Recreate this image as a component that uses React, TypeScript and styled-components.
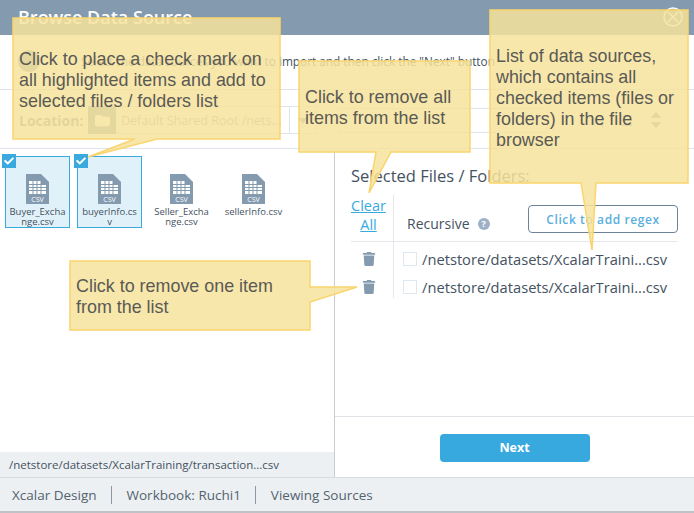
import { Fragment } from "react";
import styled, { createGlobalStyle } from "styled-components";
import { FaCheck, FaFolder, FaTrash } from "react-icons/fa";

const GlobalStyle = createGlobalStyle`
  html, body {
    margin: 0;
    padding: 0;
    background: #fff;
    font-family: "Open Sans", sans-serif;
  }
  * {
    box-sizing: border-box;
  }
`;

const Page = styled.div`
  position: relative;
  width: 694px;
  height: 513px;
  overflow: hidden;
  display: flex;
  flex-direction: column;
  color: #44525f;
`;
const Header = styled.div`
  position: relative;
  height: 35px;
  flex: none;
  background: #839aaf;
  color: #fff;
  font-size: 18px;
  font-weight: 600;
  line-height: 35px;
  padding-left: 18px;
`;
const CloseIcon = styled.svg`
  position: absolute;
  right: 11px;
  top: 7px;
`;
const Intro = styled.div`
  height: 55px;
  flex: none;
  display: flex;
  align-items: center;
  gap: 41px;
  padding: 0 0 3px 18px;
  font-size: 11.8px;
  border-bottom: 1px solid #dfe3ec;
  white-space: nowrap;
`;
const InfoDot = styled.div`
  width: 22px;
  height: 22px;
  border-radius: 50%;
  background: #839aaf;
`;
const Toolbar = styled.div`
  height: 59px;
  flex: none;
  display: flex;
  align-items: center;
  padding: 2px 0 0 19px;
  border-bottom: 1px solid #dfe3ec;
`;
const LocationLabel = styled.div`
  width: 69px;
  font-size: 14px;
  font-weight: 700;
  color: #6d8094;
`;
const FolderButton = styled.div`
  width: 28px;
  height: 28px;
  background: #839aaf;
  color: #fff;
  display: flex;
  align-items: center;
  justify-content: center;
`;
const PathInput = styled.div`
  width: 174px;
  height: 28px;
  padding-left: 5px;
  line-height: 28px;
  font-size: 12.5px;
  color: #8b9bab;
  border: 1px solid #dfe3ec;
  border-left: none;
  white-space: nowrap;
`;
const PathDropdown = styled.div`
  position: relative;
  width: 27px;
  height: 28px;
  border: 1px solid #dfe3ec;
  border-left: none;
  &::after {
    content: "";
    position: absolute;
    left: 8px;
    top: 11px;
    border: 5px solid transparent;
    border-top: 6px solid #839aaf;
  }
`;
const SearchInput = styled.div`
  width: 210px;
  height: 25px;
  margin-left: 21px;
  border: 1px solid #dfe3ec;
`;
const ToolIcons = styled.div`
  display: flex;
  align-items: center;
  gap: 14px;
  margin-left: 43px;
  font-size: 15px;
  color: #839aaf;
`;
const SortArrows = styled.svg`
  margin-left: 3px;
`;
const Body = styled.div`
  flex: 1;
  min-height: 0;
  display: flex;
`;
const LeftPanel = styled.div`
  width: 335px;
  flex: none;
  display: flex;
  flex-direction: column;
  border-right: 1px solid #c9cdd2;
`;
const FileGrid = styled.div`
  flex: 1;
  display: flex;
  align-items: flex-start;
  gap: 7px;
  padding: 7px 0 0 5px;
`;
const FileCard = styled.div<{ $selected?: boolean }>`
  position: relative;
  width: 65px;
  height: 72px;
  display: flex;
  flex-direction: column;
  align-items: center;
  padding-top: 17px;
  border: 1px solid ${(p) => (p.$selected ? "#3aa9de" : "transparent")};
  background: ${(p) => (p.$selected ? "#e0f1f9" : "transparent")};
`;
const FileName = styled.div`
  width: 58.5px;
  margin-top: 3px;
  text-align: center;
  font-size: 9.5px;
  line-height: 10px;
  word-break: break-all;
`;
const CheckMark = styled.div`
  position: absolute;
  left: -4px;
  top: -3px;
  width: 14px;
  height: 14px;
  background: #3aa9de;
  color: #fff;
  font-size: 10px;
  display: flex;
  align-items: center;
  justify-content: center;
`;
const PathBar = styled.div`
  height: 25px;
  flex: none;
  background: #edf0f3;
  padding-left: 9px;
  font-size: 11.5px;
  line-height: 25px;
`;
const RightPanel = styled.div`
  flex: 1;
  display: flex;
  flex-direction: column;
`;
const SelectedArea = styled.div`
  flex: 1;
  padding: 16px 16px 0;
`;
const SelectedTitle = styled.div`
  font-size: 16.5px;
  line-height: 22px;
  margin-bottom: 8px;
  white-space: nowrap;
`;
const SelectedTable = styled.div`
  display: grid;
  grid-template-columns: 43px 1fr;
`;
const ClearCell = styled.div`
  border-right: 1px solid #e4e8ec;
  border-bottom: 1px solid #e4e8ec;
  height: 47px;
  padding: 1px 7px 0 0;
  text-align: center;
  font-size: 14.5px;
  line-height: 19px;
  color: #3aa9de;
  text-decoration: underline;
`;
const HeaderCell = styled.div`
  height: 47px;
  display: flex;
  align-items: flex-start;
  justify-content: space-between;
  padding-left: 13px;
  border-bottom: 1px solid #e4e8ec;
`;
const RecursiveLabel = styled.div`
  display: flex;
  align-items: center;
  gap: 8px;
  margin-top: 19px;
  font-size: 14px;
  line-height: 20px;
`;
const HelpDot = styled.span`
  width: 12px;
  height: 12px;
  border-radius: 50%;
  background: #9fb1c7;
  color: #fff;
  font-size: 9px;
  font-weight: 700;
  line-height: 12px;
  text-align: center;
`;
const RegexButton = styled.div`
  width: 150px;
  height: 28px;
  margin-top: 10px;
  border: 1px solid #6e8398;
  border-radius: 4px;
  text-align: center;
  font-size: 12px;
  font-weight: 600;
  letter-spacing: 0.6px;
  line-height: 27px;
  color: #5aaee0;
`;
const TrashCell = styled.div`
  height: 28px;
  display: flex;
  align-items: center;
  justify-content: center;
  padding: 6px 7px 0 0;
  border-right: 1px solid #e4e8ec;
  color: #839aaf;
  font-size: 14px;
`;
const SourceRow = styled.div`
  height: 28px;
  display: flex;
  align-items: center;
  gap: 5px;
  padding: 6px 0 0 9px;
  font-size: 14.7px;
  white-space: nowrap;
`;
const SourceBox = styled.div`
  width: 14px;
  height: 14px;
  border: 1px solid #dde8f2;
`;
const NextArea = styled.div`
  height: 61px;
  flex: none;
  display: flex;
  align-items: center;
  justify-content: center;
  border-top: 1px solid #dfe3e8;
`;
const NextButton = styled.div`
  width: 150px;
  height: 28px;
  margin-top: 1px;
  border-radius: 4px;
  background: #37a9de;
  color: #fff;
  text-align: center;
  font-size: 12.5px;
  font-weight: 700;
  line-height: 28px;
`;
const Footer = styled.div`
  height: 36px;
  flex: none;
  display: flex;
  align-items: center;
  padding-left: 12px;
  background: #edf0f3;
  border-top: 1px solid #d8dce0;
  border-bottom: 2px solid #bfc3c7;
  font-size: 13.5px;
  font-weight: 500;
  color: #52636f;
`;
const FooterItem = styled.div`
  padding-right: 14px;
  & + & {
    padding-left: 15px;
    border-left: 1px solid #8d98a3;
  }
`;
const Callout = styled.div<{ $x: number; $y: number; $w: number; $h: number }>`
  position: absolute;
  left: ${(p) => p.$x}px;
  top: ${(p) => p.$y}px;
  width: ${(p) => p.$w}px;
  height: ${(p) => p.$h}px;
  display: flex;
  align-items: center;
  padding: 3px 0 0 6px;
  font-family: "Liberation Sans", Arial, sans-serif;
  font-size: 17.9px;
  line-height: 21px;
  color: #5a5a55;
`;
const CalloutShape = styled.svg`
  position: absolute;
  left: 0;
  top: 0;
  overflow: visible;
`;
const CalloutText = styled.div`
  position: relative;
  white-space: nowrap;
`;

const files = [
  { name: "Buyer_Exchange.csv", selected: true },
  { name: "buyerInfo.csv", selected: true },
  { name: "Seller_Exchange.csv", selected: false },
  { name: "sellerInfo.csv", selected: false },
];

const callouts = [
  {
    x: 13, y: 18, w: 267, h: 121,
    shape: "M0 0H267V121H144L75 139L122 121H0Z",
    lines: ["Click to place a check mark on", "all highlighted items and add to", "selected files / folders list"],
  },
  {
    x: 299, y: 61, w: 171, h: 91,
    shape: "M0 0H171V91H92L70 132L77 91H0Z",
    lines: ["Click to remove all", "items from the list"],
  },
  {
    x: 490, y: 10, w: 198, h: 173,
    shape: "M0 0H198V173H106L102 240L91 173H0Z",
    lines: ["List of data sources,", "which contains all", "checked items (files or", "folders) in the file", "browser"],
  },
  {
    x: 70, y: 261, w: 240, h: 69,
    shape: "M0 0H240V26L287 26L240 41V69H0Z",
    lines: ["Click to remove one item", "from the list"],
  },
];

function CsvIcon() {
  return (
    <svg width="23" height="30" viewBox="0 0 23 30">
      <path d="M0 0H15L23 8V30H0Z" fill="#839aaf" />
      <path d="M3 7H15V20H3ZM15 10H20V20H15Z" fill="#fff" />
      <path d="M3 10.5H20M3 13.5H20M3 16.5H20M7 7V20M11 7V20M15 7V20" stroke="#839aaf" strokeWidth="1" />
      <text x="11.5" y="28" textAnchor="middle" fontFamily="Open Sans, sans-serif" fontSize="7" fill="#fff">
        CSV
      </text>
    </svg>
  );
}

function App() {
  return (
    <Page>
      <GlobalStyle />
      <Header>
        Browse Data Source
        <CloseIcon width="20" height="20" viewBox="0 0 20 20" fill="none" stroke="#fff" strokeWidth="1.5">
          <circle cx="10" cy="10" r="9" />
          <path d="M5 5L15 15M15 5L5 15" />
        </CloseIcon>
      </Header>
      <Intro>
        <InfoDot />
        Select the data sources you want to import and then click the "Next" button
      </Intro>
      <Toolbar>
        <LocationLabel>Location:</LocationLabel>
        <FolderButton>
          <FaFolder size={15} />
        </FolderButton>
        <PathInput>Default Shared Root /nets...</PathInput>
        <PathDropdown />
        <SearchInput />
        <ToolIcons>
          <span>↑↓</span>
          <span>☰</span>
          <SortArrows width="12" height="18" viewBox="0 0 12 18" fill="#839aaf">
            <path d="M6 1L11 7H1ZM6 17L1 11H11Z" />
          </SortArrows>
        </ToolIcons>
      </Toolbar>
      <Body>
        <LeftPanel>
          <FileGrid>
            {files.map((file) => (
              <FileCard key={file.name} $selected={file.selected}>
                {file.selected && (
                  <CheckMark>
                    <FaCheck />
                  </CheckMark>
                )}
                <CsvIcon />
                <FileName>{file.name}</FileName>
              </FileCard>
            ))}
          </FileGrid>
          <PathBar>/netstore/datasets/XcalarTraining/transaction...csv</PathBar>
        </LeftPanel>
        <RightPanel>
          <SelectedArea>
            <SelectedTitle>Selected Files / Folders:</SelectedTitle>
            <SelectedTable>
              <ClearCell>Clear All</ClearCell>
              <HeaderCell>
                <RecursiveLabel>
                  Recursive <HelpDot>?</HelpDot>
                </RecursiveLabel>
                <RegexButton>Click to add regex</RegexButton>
              </HeaderCell>
              {[0, 1].map((i) => (
                <Fragment key={i}>
                  <TrashCell>
                    <FaTrash />
                  </TrashCell>
                  <SourceRow>
                    <SourceBox />
                    /netstore/datasets/XcalarTraini...csv
                  </SourceRow>
                </Fragment>
              ))}
            </SelectedTable>
          </SelectedArea>
          <NextArea>
            <NextButton>Next</NextButton>
          </NextArea>
        </RightPanel>
      </Body>
      <Footer>
        <FooterItem>Xcalar Design</FooterItem>
        <FooterItem>Workbook: Ruchi1</FooterItem>
        <FooterItem>Viewing Sources</FooterItem>
      </Footer>
      {callouts.map((c) => (
        <Callout key={c.x} $x={c.x} $y={c.y} $w={c.w} $h={c.h}>
          <CalloutShape width={c.w} height={c.h}>
            <path d={c.shape} fill="rgba(247,227,156,0.85)" stroke="#f9d56e" strokeWidth="1.5" />
          </CalloutShape>
          <CalloutText>
            {c.lines.map((line) => (
              <div key={line}>{line}</div>
            ))}
          </CalloutText>
        </Callout>
      ))}
    </Page>
  );
}

export default App;
